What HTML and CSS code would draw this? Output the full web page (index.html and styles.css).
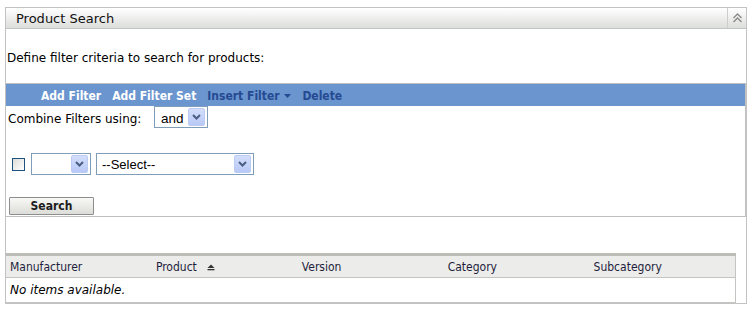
FILE: index.html
```html
<!DOCTYPE html>
<html lang="en">
<head>
  <meta charset="UTF-8">
  <title>Product Search</title>
  <link rel="stylesheet" href="styles.css">
</head>
<body>

  <div class="panel">
    <div class="panel-head">
      <span class="panel-title">Product Search</span>
      <span class="collapse">
        <svg width="11" height="10" viewBox="0 0 11 10">
          <path d="M1.5 5 L5.5 1 L9.5 5 M1.5 9 L5.5 5 L9.5 9" fill="none" stroke="#8a8a8a" stroke-width="1.4"/>
        </svg>
      </span>
    </div>

    <p class="intro">Define filter criteria to search for products:</p>

    <div class="filters">
      <div class="toolbar">
        <a class="tool light">Add Filter</a>
        <a class="tool light">Add Filter Set</a>
        <a class="tool dark">Insert Filter <svg class="caret" width="7" height="4" viewBox="0 0 7 4"><path d="M0 0 H7 L3.5 4 Z" fill="#254a92"/></svg></a>
        <a class="tool dark">Delete</a>
      </div>

      <div class="combine">
        <span>Combine Filters using:</span>
        <div class="select sel-and">
          <span class="sel-value">and</span>
          <span class="sel-btn"><svg width="9" height="6" viewBox="0 0 9 6"><path d="M1 1 L4.5 4.5 L8 1" fill="none" stroke="#4a5e84" stroke-width="2"/></svg></span>
        </div>
      </div>

      <div class="filter-row">
        <span class="check"></span>
        <div class="select sel-op">
          <span class="sel-value"></span>
          <span class="sel-btn"><svg width="9" height="6" viewBox="0 0 9 6"><path d="M1 1 L4.5 4.5 L8 1" fill="none" stroke="#4a5e84" stroke-width="2"/></svg></span>
        </div>
        <div class="select sel-field">
          <span class="sel-value">--Select--</span>
          <span class="sel-btn"><svg width="9" height="6" viewBox="0 0 9 6"><path d="M1 1 L4.5 4.5 L8 1" fill="none" stroke="#4a5e84" stroke-width="2"/></svg></span>
        </div>
      </div>

      <button class="search-btn">Search</button>
    </div>

    <table class="results">
      <thead>
        <tr>
          <th>Manufacturer</th>
          <th>Product <span class="sort"><svg width="8" height="7" viewBox="0 0 8 7"><path d="M0.5 4 L4 0.5 L7.5 4 Z" fill="#333"/><rect x="0.5" y="5" width="7" height="1.3" fill="#333"/></svg></span></th>
          <th>Version</th>
          <th>Category</th>
          <th>Subcategory</th>
        </tr>
      </thead>
      <tbody>
        <tr>
          <td colspan="5" class="empty">No items available.</td>
        </tr>
      </tbody>
    </table>
  </div>

</body>
</html>
```

FILE: styles.css
```css
body {
  margin: 0;
  font-family: "DejaVu Sans", sans-serif;
  font-size: 12px;
  color: #000;
  background: #fff;
}
.panel {
  margin: 7px 0 0 5px;
  width: 740px;
  height: 295px;
  border: 1px solid #c3c3c3;
}
.panel-head {
  display: flex;
  align-items: center;
  height: 20px;
  border-bottom: 1px solid #c3c3c3;
  background: linear-gradient(to bottom, #ffffff, #dcdedb);
}
.panel-title {
  flex: 1;
  padding-left: 10px;
  font-size: 13px;
  color: #111;
}
.collapse {
  display: flex;
  align-items: center;
  justify-content: center;
  width: 18px;
  height: 20px;
  border-left: 1px solid #cdcdcd;
}
.intro {
  margin: 0;
  padding: 22px 0 0 1px;
  height: 32px;
  line-height: 15px;
}
.filters {
  border-top: 1px solid #c0c0c0;
  border-right: 1px solid #c0c0c0;
  border-bottom: 1px solid #c0c0c0;
  height: 132px;
}
.toolbar {
  display: flex;
  align-items: center;
  gap: 11px;
  height: 22px;
  padding: 1px 0 0 35px;
  box-sizing: border-box;
  background: #6a95ce;
  font-family: "DejaVu Sans Condensed", "DejaVu Sans", sans-serif;
  font-weight: bold;
}
.tool {
  cursor: pointer;
}
.light {
  color: #ffffff;
}
.dark {
  color: #254a92;
}
.caret {
  margin-left: 1px;
  vertical-align: 2px;
}
.combine {
  display: flex;
  align-items: center;
  height: 22px;
  padding-left: 2px;
}
.combine span:first-child {
  width: 146px;
  padding-top: 3px;
}
.select {
  display: flex;
  align-items: center;
  box-sizing: border-box;
  height: 22px;
  border: 1px solid #7f9db9;
  background: #fff;
  font-family: "Liberation Sans", Arial, sans-serif;
  font-size: 13px;
}
.sel-value {
  flex: 1;
  padding-left: 5px;
}
.sel-btn {
  display: flex;
  align-items: center;
  justify-content: center;
  width: 15px;
  height: 16px;
  margin-right: 2px;
  border: 1px solid #bccbf4;
  border-radius: 2px;
  background: linear-gradient(to bottom, #d3defb, #b8c9f6);
}
.sel-and {
  width: 54px;
  font-size: 13.5px;
}
.sel-and .sel-value {
  padding-left: 6px;
}
.filter-row {
  display: flex;
  align-items: center;
  gap: 5px;
  margin-top: 25px;
  padding-left: 6px;
}
.check {
  box-sizing: border-box;
  width: 13px;
  height: 13px;
  margin-right: 1px;
  border: 1px solid #1c5180;
  background: linear-gradient(135deg, #dcdcd7, #ffffff);
}
.sel-op {
  width: 60px;
}
.sel-field {
  width: 158px;
}
.search-btn {
  display: block;
  width: 85px;
  height: 18px;
  margin: 22px 0 0 3px;
  padding: 0;
  border: 1px solid #8e8e8e;
  border-radius: 1px;
  background: linear-gradient(to bottom, #f8f8f6, #dcdcd8);
  font-family: "DejaVu Sans Condensed", "DejaVu Sans", sans-serif;
  font-size: 12px;
  font-weight: bold;
  color: #1c1c1c;
  line-height: 15px;
}
.results {
  width: 730px;
  margin-top: 36px;
  border-collapse: collapse;
  border-top: 3px solid #bdbdb8;
  border-right: 1px solid #c4c4c0;
  border-bottom: 1px solid #c4c4c0;
  table-layout: fixed;
  font-family: "DejaVu Sans Condensed", "DejaVu Sans", sans-serif;
}
.results th {
  height: 21px;
  padding: 0 0 0 4px;
  background: #ececea;
  border-bottom: 1px solid #c4c4c0;
  font-weight: normal;
  text-align: left;
  color: #1e1e3c;
}
.sort {
  margin-left: 7px;
}
.results td {
  height: 24px;
  padding: 0 0 0 4px;
}
.empty {
  font-family: "DejaVu Sans", sans-serif;
  font-style: italic;
}
```
